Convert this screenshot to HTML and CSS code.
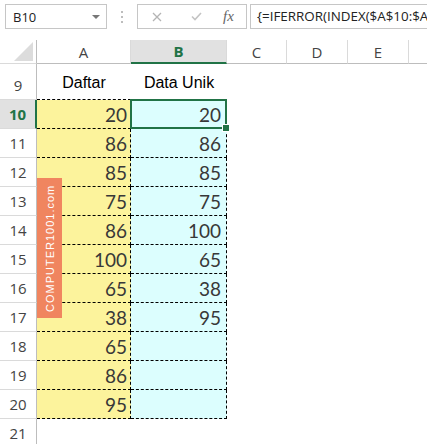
FILE: index.html
```html
<!DOCTYPE html>
<html lang="en">
<head>
<meta charset="UTF-8">
<title>Data Unik</title>
<link rel="stylesheet" href="styles.css">
</head>
<body>
<div class="toolbar">
  <div class="namebox">
    <span>B10</span>
    <svg class="caret" width="8" height="4" viewBox="0 0 8 4"><path d="M0 0H8L4 4Z" fill="#777"/></svg>
  </div>
  <div class="grip"><i></i><i></i><i></i></div>
  <div class="fx-buttons">
    <svg class="cancel" width="10" height="10" viewBox="0 0 10 10"><path d="M1 1L9 9M9 1L1 9" stroke="#b4b4b4" stroke-width="1.3"/></svg>
    <svg class="enter" width="11" height="9" viewBox="0 0 11 9"><path d="M1 4.5L4 7.5L10 1" stroke="#c4c4c4" stroke-width="1.6" fill="none"/></svg>
    <span class="fx">fx</span>
  </div>
  <div class="formula">{=IFERROR(INDEX($A$10:$A</div>
</div>

<div class="sheet">
  <div class="row head">
    <div class="rh corner">
      <svg width="19" height="19" viewBox="0 0 19 19"><path d="M19 0V19H0Z" fill="#dcdcdc"/></svg>
    </div>
    <div class="ch col-a">A</div>
    <div class="ch col-b active">B</div>
    <div class="ch col-c">C</div>
    <div class="ch col-d">D</div>
    <div class="ch col-e">E</div>
    <div class="ch col-f"></div>
  </div>

  <div class="row title">
    <div class="rh">9</div>
    <div class="cell col-a label">Daftar</div>
    <div class="cell col-b label">Data Unik</div>
  </div>

  <div class="row"><div class="rh active">10</div><div class="cell col-a list">20</div><div class="cell col-b uniq selected">20</div></div>
  <div class="row"><div class="rh">11</div><div class="cell col-a list">86</div><div class="cell col-b uniq">86</div></div>
  <div class="row"><div class="rh">12</div><div class="cell col-a list">85</div><div class="cell col-b uniq">85</div></div>
  <div class="row"><div class="rh">13</div><div class="cell col-a list">75</div><div class="cell col-b uniq">75</div></div>
  <div class="row"><div class="rh">14</div><div class="cell col-a list">86</div><div class="cell col-b uniq">100</div></div>
  <div class="row"><div class="rh">15</div><div class="cell col-a list">100</div><div class="cell col-b uniq">65</div></div>
  <div class="row"><div class="rh">16</div><div class="cell col-a list">65</div><div class="cell col-b uniq">38</div></div>
  <div class="row"><div class="rh">17</div><div class="cell col-a list">38</div><div class="cell col-b uniq">95</div></div>
  <div class="row"><div class="rh">18</div><div class="cell col-a list">65</div><div class="cell col-b uniq"></div></div>
  <div class="row"><div class="rh">19</div><div class="cell col-a list">86</div><div class="cell col-b uniq"></div></div>
  <div class="row"><div class="rh">20</div><div class="cell col-a list">95</div><div class="cell col-b uniq"></div></div>
  <div class="row"><div class="rh">21</div></div>

  <!-- watermark sits over column A -->
  <div class="watermark">COMPUTER1001.com</div>
</div>
</body>
</html>
```

FILE: styles.css
```css
* {
  margin: 0;
  padding: 0;
  box-sizing: border-box;
}

body {
  width: 427px;
  height: 444px;
  background: #fff;
  font-family: "Open Sans", Arial, sans-serif;
  overflow: hidden;
}

/* Formula bar */
.toolbar {
  height: 40px;
  padding-top: 4px;
  display: flex;
  align-items: flex-start;
}

.namebox {
  width: 102px;
  height: 25px;
  margin-left: 5px;
  border: 1px solid #c6c6c6;
  display: flex;
  align-items: center;
  justify-content: space-between;
  padding: 0 6px 0 7px;
  font-size: 13px;
  color: #222;
}

.grip {
  width: 30px;
  height: 25px;
  display: flex;
  flex-direction: column;
  align-items: center;
  justify-content: center;
  gap: 3px;
}

.grip i {
  width: 2px;
  height: 2px;
  background: #bdbdbd;
}

.fx-buttons {
  width: 110px;
  height: 25px;
  border: 1px solid #c6c6c6;
  display: flex;
  align-items: center;
  padding-left: 14px;
}

.fx-buttons .enter {
  margin-left: 29px;
}

.fx {
  font-family: "Liberation Serif", serif;
  font-style: italic;
  font-size: 15px;
  color: #666;
  margin-left: 21px;
}

.formula {
  flex: 1;
  min-width: 0;
  height: 25px;
  margin-left: 3px;
  border: 1px solid #c6c6c6;
  border-right: none;
  padding-left: 6px;
  font-size: 13.4px;
  line-height: 23px;
  color: #222;
  white-space: nowrap;
  overflow: hidden;
}

/* Sheet */
.sheet {
  position: relative;
}

.row {
  display: flex;
  height: 29px;
}

.row.head {
  height: 24px;
}

.row.title {
  height: 36px;
}

.rh {
  width: 37px;
  flex: none;
  border-right: 1px solid #bdbdbd;
  border-bottom: 1px solid #dadada;
  display: flex;
  align-items: center;
  justify-content: center;
  font-size: 15px;
  color: #444;
}

.title .rh {
  align-items: flex-end;
  padding-bottom: 4px;
}

.rh.active {
  background: #e1e1e1;
  color: #217346;
  font-weight: bold;
  border-right: 2px solid #217346;
}

.rh.corner {
  align-items: flex-end;
  justify-content: flex-end;
  padding: 0 3px 2px 0;
  border-bottom-color: #dadada;
}

.col-a { width: 94px; }
.col-b { width: 96px; }
.col-c { width: 60px; }
.col-d { width: 61px; }
.col-e { width: 61px; }

.ch {
  flex: none;
  border-right: 1px solid #dadada;
  border-bottom: 1px solid #bdbdbd;
  display: flex;
  align-items: center;
  justify-content: center;
  font-size: 15px;
  color: #444;
}

.ch.col-f {
  flex: 1;
  border-right: none;
}

.ch.active {
  background: #e1e1e1;
  color: #217346;
  font-weight: bold;
  border-bottom: 2px solid #217346;
}

.cell {
  flex: none;
  display: flex;
  align-items: center;
  justify-content: flex-end;
  padding-right: 3px;
  font-family: Lato, "Liberation Sans", sans-serif;
  font-size: 19px;
  color: #383838;
}

.cell.label {
  justify-content: center;
  align-items: flex-end;
  padding: 0 0 7px;
  font-family: "Liberation Sans", Arial, sans-serif;
  font-size: 16px;
  color: #000;
  border-bottom: 1px dashed #000;
}

.cell.list {
  background: #fcf39c;
  border-right: 1px dashed #000;
  border-bottom: 1px dashed #000;
}

.cell.uniq {
  background: #dcfefe;
  border-right: 1px dashed #000;
  border-bottom: 1px dashed #000;
  padding-right: 5px;
}

/* active cell frame + fill handle */
.cell.selected {
  position: relative;
}

.cell.selected::after {
  content: '';
  position: absolute;
  left: -1px;
  top: -1px;
  right: -1px;
  bottom: -1px;
  border: 2px solid #217346;
}

.cell.selected::before {
  content: '';
  position: absolute;
  right: -4px;
  bottom: -4px;
  width: 6px;
  height: 6px;
  background: #217346;
  border: 1px solid #fff;
  z-index: 1;
}

.watermark {
  position: absolute;
  left: 37px;
  top: 138px;
  width: 25px;
  height: 140px;
  background: #f0855f;
  color: #fff;
  writing-mode: vertical-rl;
  transform: rotate(180deg);
  display: flex;
  align-items: center;
  justify-content: center;
  font-family: "Liberation Sans", Arial, sans-serif;
  font-size: 11px;
  letter-spacing: 1px;
}
```
